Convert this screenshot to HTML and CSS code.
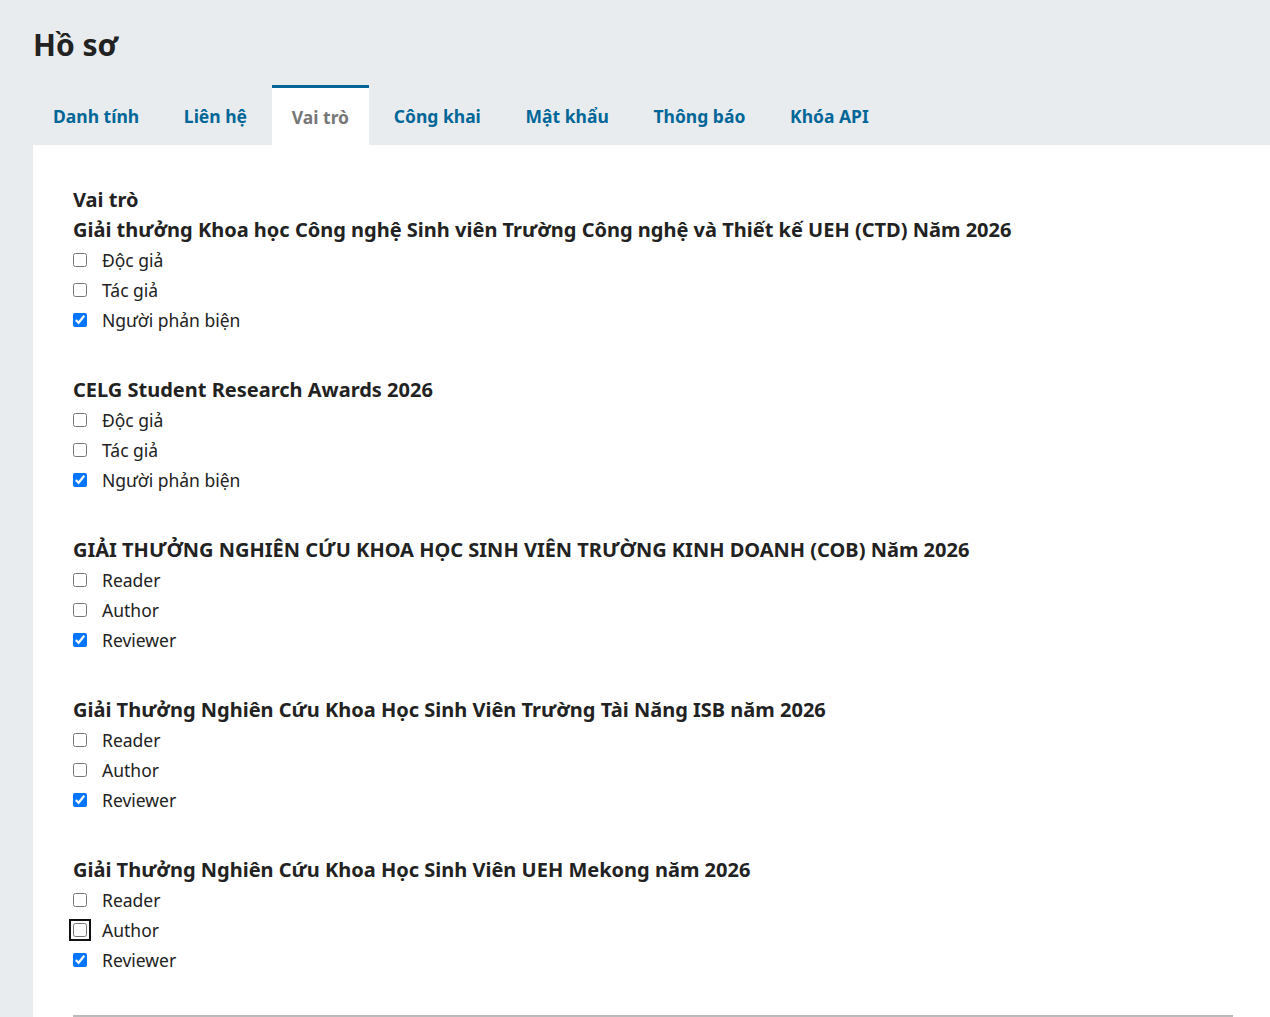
FILE: index.html
```html
<!DOCTYPE html>
<html lang="vi">
<head>
<meta charset="utf-8">
<title>Hồ sơ</title>
<link rel="stylesheet" href="styles.css">
</head>
<body>
<div class="page">
  <h1 class="title">Hồ sơ</h1>
  <nav class="tabs">
    <a class="tab">Danh tính</a>
    <a class="tab">Liên hệ</a>
    <a class="tab active">Vai trò</a>
    <a class="tab">Công khai</a>
    <a class="tab">Mật khẩu</a>
    <a class="tab">Thông báo</a>
    <a class="tab">Khóa API</a>
  </nav>
  <section class="panel">
    <h2 class="panel-title">Vai trò</h2>
    <div class="group">
      <h3 class="group-title">Giải thưởng Khoa học Công nghệ Sinh viên Trường Công nghệ và Thiết kế UEH (CTD) Năm 2026</h3>
      <label class="row"><input type="checkbox"><span>Độc giả</span></label>
      <label class="row"><input type="checkbox"><span>Tác giả</span></label>
      <label class="row"><input type="checkbox" checked><span>Người phản biện</span></label>
    </div>
    <div class="group">
      <h3 class="group-title">CELG Student Research Awards 2026</h3>
      <label class="row"><input type="checkbox"><span>Độc giả</span></label>
      <label class="row"><input type="checkbox"><span>Tác giả</span></label>
      <label class="row"><input type="checkbox" checked><span>Người phản biện</span></label>
    </div>
    <div class="group">
      <h3 class="group-title">GIẢI THƯỞNG NGHIÊN CỨU KHOA HỌC SINH VIÊN TRƯỜNG KINH DOANH (COB) Năm 2026</h3>
      <label class="row"><input type="checkbox"><span>Reader</span></label>
      <label class="row"><input type="checkbox"><span>Author</span></label>
      <label class="row"><input type="checkbox" checked><span>Reviewer</span></label>
    </div>
    <div class="group">
      <h3 class="group-title">Giải Thưởng Nghiên Cứu Khoa Học Sinh Viên Trường Tài Năng ISB năm 2026</h3>
      <label class="row"><input type="checkbox"><span>Reader</span></label>
      <label class="row"><input type="checkbox"><span>Author</span></label>
      <label class="row"><input type="checkbox" checked><span>Reviewer</span></label>
    </div>
    <div class="group">
      <h3 class="group-title">Giải Thưởng Nghiên Cứu Khoa Học Sinh Viên UEH Mekong năm 2026</h3>
      <label class="row"><input type="checkbox"><span>Reader</span></label>
      <label class="row"><input type="checkbox" class="focused"><span>Author</span></label>
      <label class="row"><input type="checkbox" checked><span>Reviewer</span></label>
    </div>
    <div class="box"></div>
  </section>
</div>
</body>
</html>
```
FILE: styles.css
```css
html, body {
  margin: 0;
  padding: 0;
  background: #e9ecee;
  font-family: "Noto Sans", "Open Sans", sans-serif;
  color: #222;
}
.page {
  padding-left: 33px;
  overflow: hidden;
  height: 1017px;
}
.title {
  margin: 0;
  padding-top: 25px;
  font-size: 30px;
  line-height: 40px;
  font-weight: 700;
  color: #222;
}
.tabs {
  display: flex;
  gap: 4.7px;
  margin-top: 20px;
  height: 60px;
}
.tab {
  display: block;
  padding: 0 20px;
  font-size: 17.5px;
  font-weight: 700;
  line-height: 62px;
  height: 60px;
  color: #006798;
  box-sizing: border-box;
}
.tab.active {
  background: #fff;
  color: #777;
  border-top: 3px solid #006798;
  line-height: 59px;
}
.panel {
  background: #fff;
  padding: 40px 37px 0 40px;
  height: 900px;
}
.panel-title {
  margin: 0;
  font-size: 20px;
  line-height: 30px;
  font-weight: 700;
}
.group {
  margin-bottom: 40px;
}
.group-title {
  margin: 0;
  font-size: 20px;
  line-height: 30px;
  font-weight: 700;
}
.row {
  display: flex;
  align-items: center;
  height: 30px;
  font-size: 17.5px;
  color: #222;
}
.row input {
  width: 14px;
  height: 14px;
  margin: 0 15px 0 0;
  accent-color: #0075ff;
}
.row input.focused {
  outline: 2px solid #111;
  outline-offset: 2px;
  border-radius: 5px;
}
.box {
  margin-top: 4px;
  border: 2px solid #bbb;
  border-bottom: none;
  height: 40px;
}
```
